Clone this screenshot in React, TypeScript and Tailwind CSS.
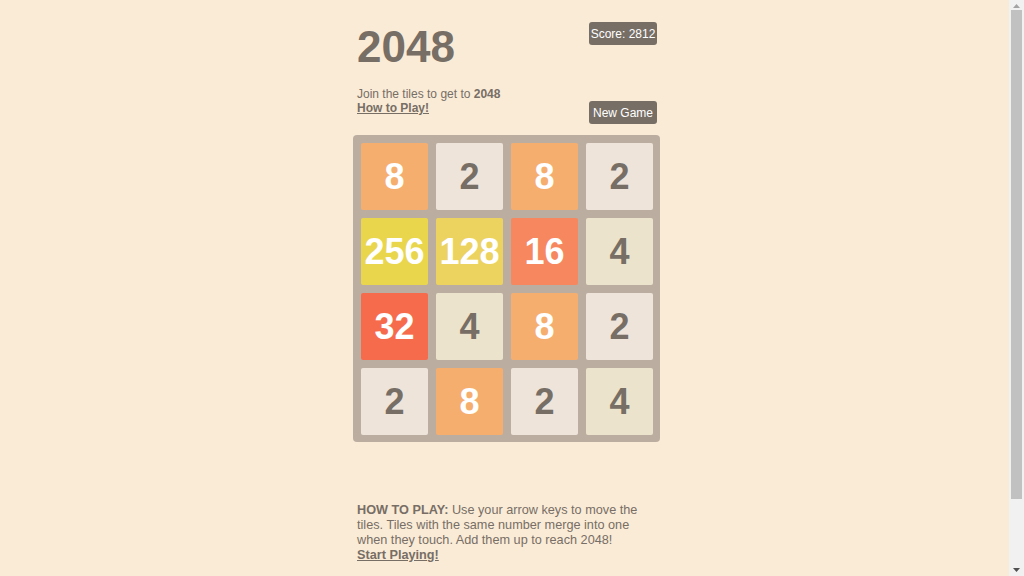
import React from 'react';

type Tile = { value: number };

const board: number[][] = [
  [8, 2, 8, 2],
  [256, 128, 16, 4],
  [32, 4, 8, 2],
  [2, 8, 2, 4],
];

const tileStyles: Record<number, string> = {
  2: 'bg-[#eee4da] text-[#776e65]',
  4: 'bg-[#ebe3cb] text-[#776e65]',
  8: 'bg-[#f5ae6e] text-white',
  16: 'bg-[#f6875f] text-white',
  32: 'bg-[#f76b4d] text-white',
  64: 'bg-[#f65e3b] text-white',
  128: 'bg-[#ecd35f] text-white',
  256: 'bg-[#e9d64c] text-white',
};

const TileCell: React.FC<Tile> = ({ value }) => (
  <div
    className={`flex h-[67px] items-center justify-center rounded-[2px] text-[36px] font-bold leading-none ${tileStyles[value]}`}
  >
    {value}
  </div>
);

// page scroll track on the right edge
const ScrollTrack: React.FC = () => (
  <div className="flex h-[576px] w-[15px] shrink-0 flex-col items-center bg-[#f1f1f1]">
    <svg width="7" height="4" viewBox="0 0 7 4" className="mt-[4px]">
      <path d="M0 4 L3.5 0 L7 4 Z" fill="#a3a3a3" />
    </svg>
    <div className="mt-[2px] h-[489px] w-[11px] bg-[#c1c1c1]" />
    <div className="flex-1" />
    <svg width="7" height="4" viewBox="0 0 7 4" className="mb-[4px]">
      <path d="M0 0 L7 0 L3.5 4 Z" fill="#505050" />
    </svg>
  </div>
);

const App: React.FC = () => {
  return (
    <div className="flex h-[576px] overflow-hidden bg-[#faebd7] font-['Liberation_Sans',Arial,sans-serif] text-[#776e65]">
      <div className="flex-1 pl-[5px]">
        <div className="mx-auto w-[300px] pt-[22px] pb-[90px]">
          <div className="flex items-start justify-between">
            <h1 className="text-[44px] font-bold leading-[50px]">2048</h1>
            <div className="flex h-[23px] w-[68px] items-center justify-center rounded-[3px] bg-[#776e65] text-[12px] text-white">
              Score: 2812
            </div>
          </div>

          <div className="mt-[15px] flex items-start justify-between">
            <p className="text-[12px] leading-[14px]">
              Join the tiles to get to <strong>2048</strong>
              <br />
              <a href="#" className="font-bold underline">
                How to Play!
              </a>
            </p>
            <button className="mt-[14px] flex h-[23px] w-[68px] items-center justify-center rounded-[3px] bg-[#776e65] text-[12px] text-white">
              New Game
            </button>
          </div>

          <div className="-mx-[4px] mt-[11px] grid w-[307px] grid-cols-4 gap-[8px] rounded-[4px] bg-[#bbada0] p-[8px] pr-[7px] pb-[7px]">
            {board.flat().map((v, i) => (
              <TileCell key={i} value={v} />
            ))}
          </div>

          <p className="mt-[61px] text-[12.7px] leading-[15px]">
            <strong>HOW TO PLAY:</strong> Use your arrow keys to move the tiles. Tiles with the same
            number merge into one when they touch. Add them up to reach 2048!
            <br />
            <a href="#" className="font-bold underline">
              Start Playing!
            </a>
          </p>
        </div>
      </div>
      <ScrollTrack />
    </div>
  );
};

export default App;
